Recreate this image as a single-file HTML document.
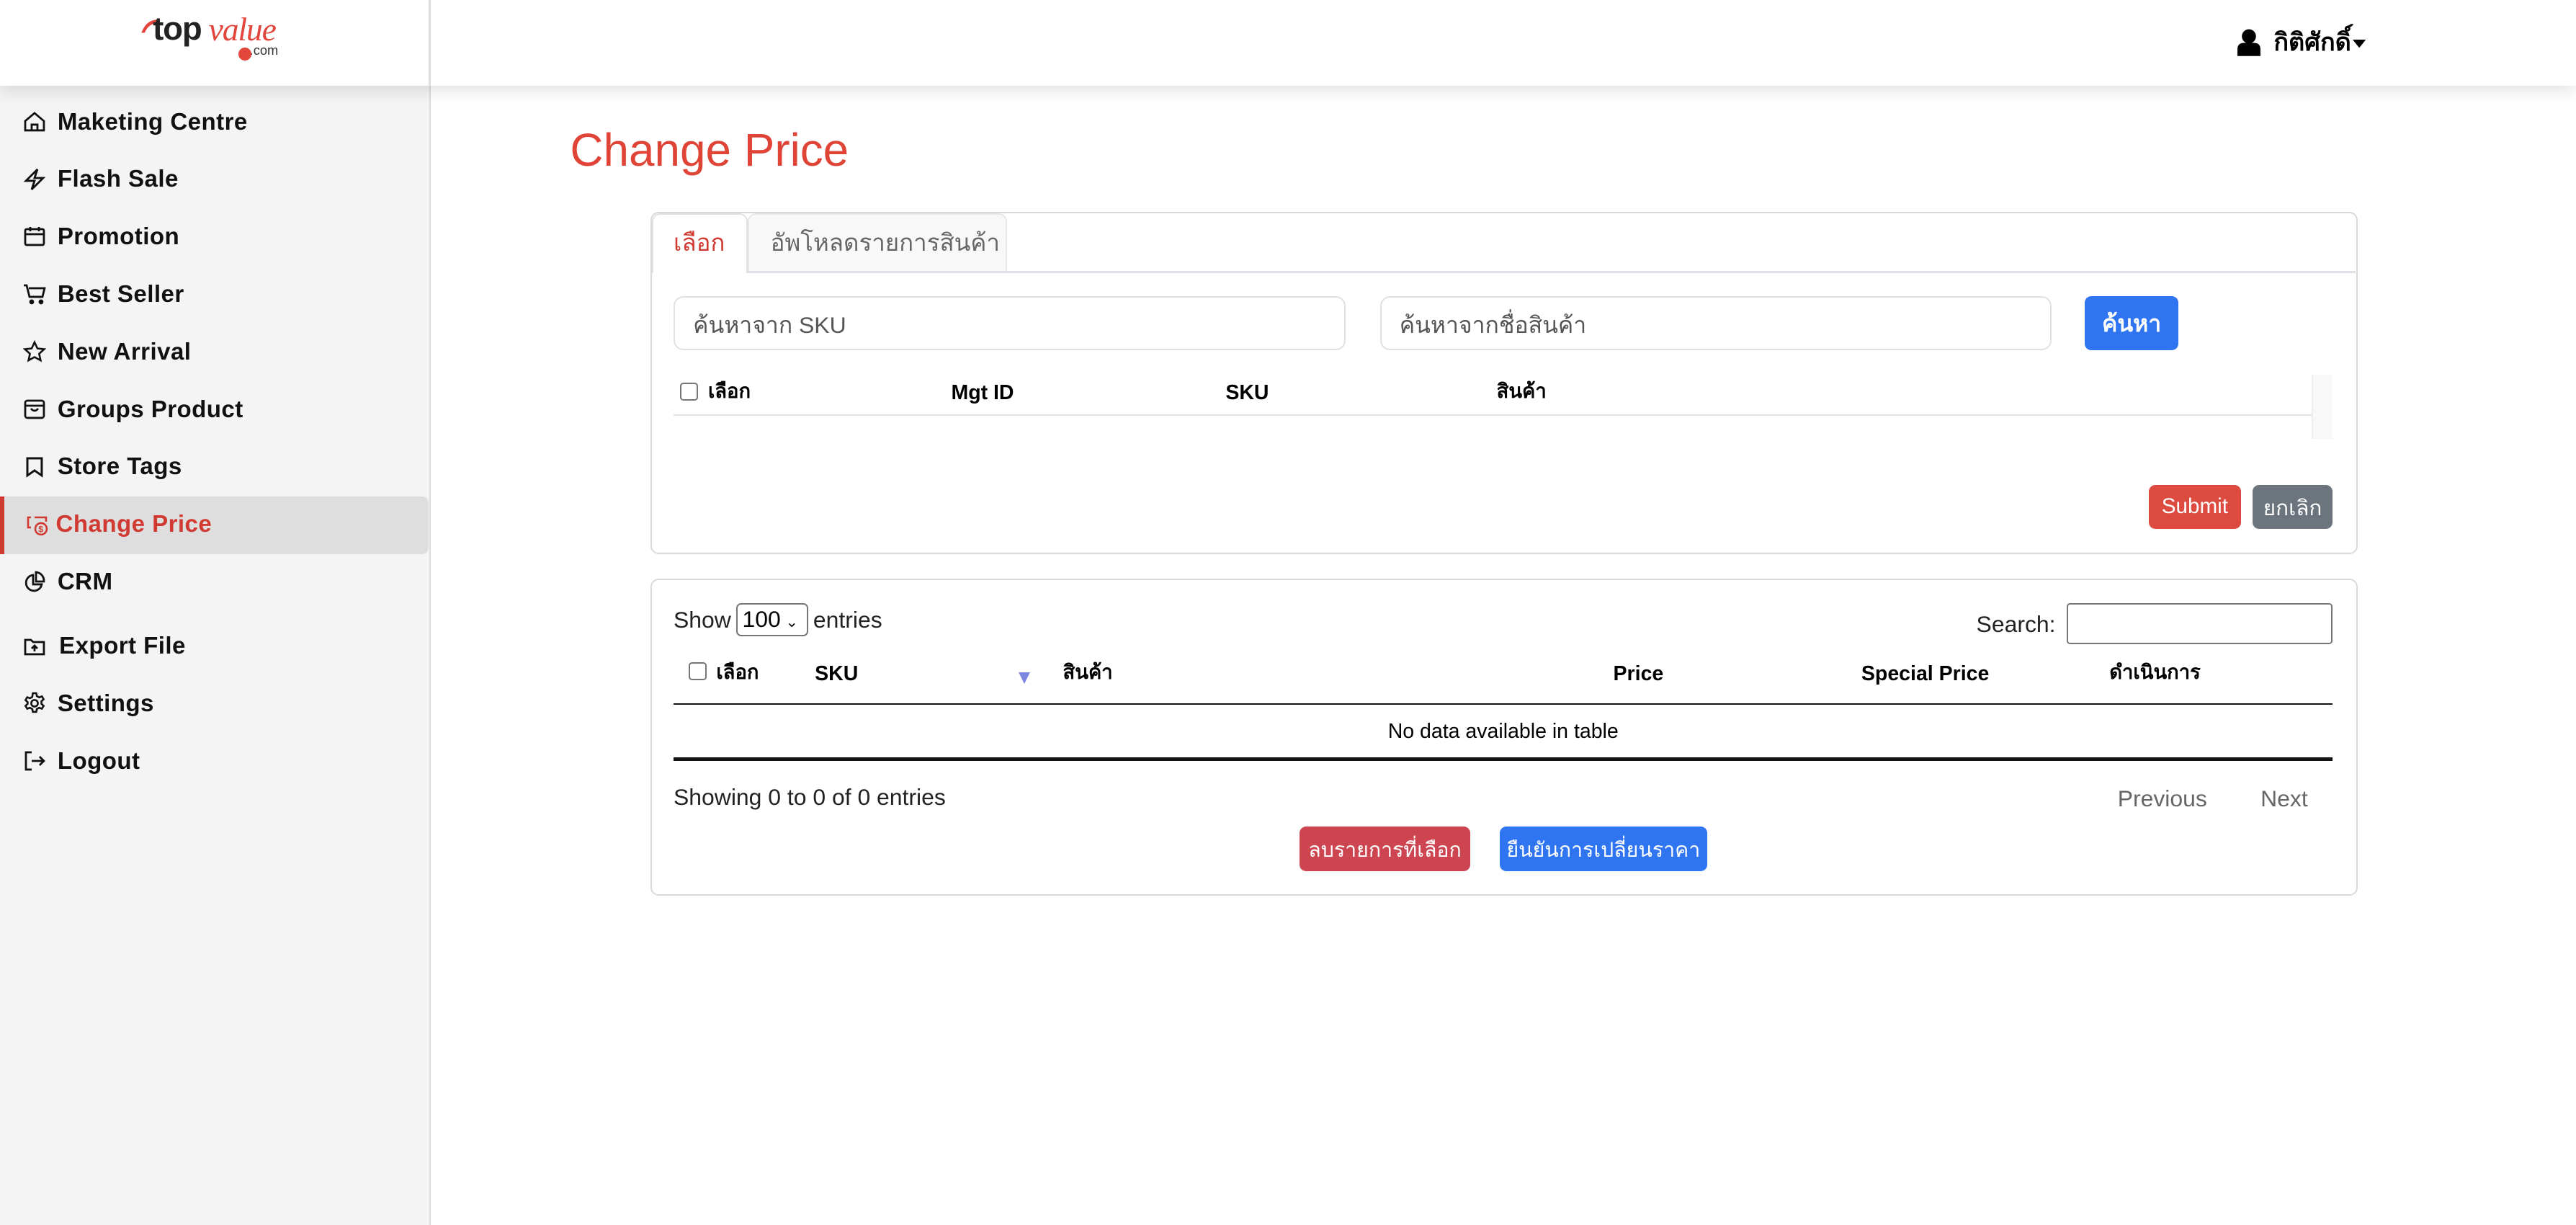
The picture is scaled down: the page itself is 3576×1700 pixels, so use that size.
<!DOCTYPE html>
<html><head><meta charset="utf-8"><style>
*{box-sizing:border-box;margin:0;padding:0}
html,body{width:3576px;height:1700px;overflow:hidden;background:#fff}
#w{zoom:2.2806;width:1568px;height:746px;position:relative;font-family:"Liberation Sans","DejaVu Sans",sans-serif;color:#000}
.a{position:absolute;white-space:nowrap}
#side{left:0;top:0;width:262px;height:746px;background:#f4f4f4;border-right:1px solid #ddd}
#head{left:0;top:0;width:1568px;height:52px;background:#fff;box-shadow:0 3px 10px rgba(0,0,0,.12)}
.mi{position:absolute;left:0;width:261px;height:34px;font-size:14.5px;font-weight:bold;color:#111}
.mi span{position:absolute;left:35px;top:9px;letter-spacing:.2px}
.mi svg{position:absolute;left:14px;top:10px;width:14px;height:14px}
.card{position:absolute;border:1px solid #d9d9d9;border-radius:5px;background:#fff}
.inp{position:absolute;height:33px;border:1px solid #dee2e6;border-radius:6px;font-size:14px;color:#555;padding:6px 11px}
.btn{position:absolute;color:#fff;border-radius:4px;text-align:center;font-size:13px}
.th{position:absolute;font-size:12.5px;font-weight:bold}
.t{font-size:12px;margin-top:-2px}
.cb{position:absolute;width:11px;height:11px;border:1px solid #777;border-radius:2px;background:#fff}
</style></head><body><div id="w">
<div class="a" id="side"></div>
<div class="a" id="head"></div>
<div class="a" style="left:261px;top:0;width:1px;height:52px;background:#ddd"></div>
<div class="a" style="left:85px;top:6px;width:95px;height:36px">
<svg width="12" height="10" style="position:absolute;left:0;top:5px" viewBox="0 0 12 10"><path d="M1 9 Q4 1 11 1 L10 3 Q5 4 3 9Z" fill="#e2453b"/></svg>
<span class="a" style="left:8px;top:0;font-size:20px;font-weight:bold;color:#222;letter-spacing:-.5px">top</span>
<span class="a" style="left:42px;top:0;font-size:20px;font-style:italic;color:#e2453b;font-family:'Liberation Serif',serif;letter-spacing:-.5px">value</span>
<span class="a" style="left:67px;top:20px;font-size:8px;color:#333">.com</span>
<div class="a" style="left:60px;top:23px;width:8px;height:8px;border-radius:50%;background:#e2453b"></div>
</div>
<svg class="a" style="left:1362px;top:17px" width="14" height="17" viewBox="0 0 14 17"><circle cx="7" cy="5" r="4.3"/><path d="M0 17 V13 Q0 9 4 9 H10 Q14 9 14 13 V17Z"/></svg>
<div class="a" style="left:1384px;top:14px;font-size:15px;font-weight:bold">กิติศักดิ์</div>
<svg class="a" style="left:1432px;top:24px" width="8" height="5"><path d="M0 0H8L4 5Z"/></svg>
<div class="mi" style="top:57px"><svg viewBox="0 0 16 16" fill="none" stroke="#111" stroke-width="1.4"><path d="M1.5 7.5 8 2l6.5 5.5V14h-13Z M6 14V10h4v4"/></svg><span>Maketing Centre</span></div>
<div class="mi" style="top:92px"><svg viewBox="0 0 16 16" fill="none" stroke="#111" stroke-width="1.4"><path d="M10 1 2 9h6l-2 6 8-8H8Z"/></svg><span>Flash Sale</span></div>
<div class="mi" style="top:127px"><svg viewBox="0 0 16 16" fill="none" stroke="#111" stroke-width="1.4"><rect x="1.5" y="3" width="13" height="11" rx="1"/><path d="M1.5 6.5h13M5 1.5v3M11 1.5v3"/></svg><span>Promotion</span></div>
<div class="mi" style="top:162px"><svg viewBox="0 0 16 16" fill="none" stroke="#111" stroke-width="1.4"><path d="M0.5 2h2l2 8h9l1.5-6H4"/><circle cx="6" cy="13.5" r="1" fill="#111"/><circle cx="12.5" cy="13.5" r="1" fill="#111"/></svg><span>Best Seller</span></div>
<div class="mi" style="top:197px"><svg viewBox="0 0 16 16" fill="none" stroke="#111" stroke-width="1.3"><path d="M8 1.5l2 4.3 4.7.5-3.5 3.2 1 4.6L8 11.8 3.8 14.1l1-4.6L1.3 6.3 6 5.8Z"/></svg><span>New Arrival</span></div>
<div class="mi" style="top:232px"><svg viewBox="0 0 16 16" fill="none" stroke="#111" stroke-width="1.4"><rect x="1.5" y="2" width="13" height="12" rx="1.5"/><path d="M1.5 5.5h13M5.5 7.5q2.5 3 5 0"/></svg><span>Groups Product</span></div>
<div class="mi" style="top:267px"><svg viewBox="0 0 16 16" fill="none" stroke="#111" stroke-width="1.5"><path d="M3 2h10v12l-5-3.5L3 14Z"/></svg><span>Store Tags</span></div>
<div class="a" style="left:0;top:302px;width:261px;height:35px;background:#dedede;border-left:3px solid #d13a32;border-radius:0 4px 4px 0"></div>
<div class="mi" style="top:302px;color:#d13a32"><svg viewBox="0 0 16 16" fill="none" stroke="#d13a32" stroke-width="1.3" style="left:16px"><path d="M3.5 3H1.5v7h2M6 3h8v3"/><circle cx="10.5" cy="11" r="4" fill="#dedede"/><text x="8.7" y="13.3" font-size="6" fill="#d13a32" stroke="none">$</text></svg><span style="left:34px">Change Price</span></div>
<div class="mi" style="top:337px"><svg viewBox="0 0 16 16" fill="none" stroke="#111" stroke-width="1.4"><path d="M7 3.5A5.5 5.5 0 1 0 13 10H7Z M9 1.5v6.5h5.5A6 6 0 0 0 9 1.5Z"/></svg><span>CRM</span></div>
<div class="mi" style="top:376px"><svg viewBox="0 0 16 16" fill="none" stroke="#111" stroke-width="1.4"><path d="M1.5 4h4l1.5 1.5h7.5V14h-13Z M8 12V8M6 10l2-2 2 2"/></svg><span style="left:36px">Export File</span></div>
<div class="mi" style="top:411px"><svg viewBox="0 0 16 16" fill="none" stroke="#111" stroke-width="1.3"><circle cx="8" cy="8" r="2.3"/><path d="M6.8 1h2.4l.4 2 1.6.9 1.9-.7 1.2 2-1.5 1.4v1.8l1.5 1.4-1.2 2-1.9-.7-1.6.9-.4 2H6.8l-.4-2-1.6-.9-1.9.7-1.2-2 1.5-1.4V7.2L1.7 5.8l1.2-2 1.9.7 1.6-.9Z"/></svg><span>Settings</span></div>
<div class="mi" style="top:446px"><svg viewBox="0 0 16 16" fill="none" stroke="#111" stroke-width="1.4"><path d="M6 2H2v12h4M6 8h8.5M11.5 5l3 3-3 3"/></svg><span>Logout</span></div>
<div class="a" style="left:347px;top:75px;font-size:28px;color:#df4436">Change Price</div>
<div class="card" style="left:396px;top:129px;width:1039px;height:208px"></div>
<div class="a" style="left:397px;top:165px;width:1037px;height:1px;background:#dee2e6"></div>
<div class="a" style="left:397px;top:130px;width:58px;height:36px;background:#fff;border:1px solid #dee2e6;border-bottom:none;border-radius:5px 5px 0 0"></div>
<div class="a" style="left:455px;top:130px;width:158px;height:35px;background:#f8f8f8;border:1px solid #e7e7e7;border-bottom:none;border-radius:5px 5px 0 0"></div>
<div class="a" style="left:410px;top:136px;font-size:14.5px;color:#d13a32">เลือก</div>
<div class="a" style="left:469px;top:136px;font-size:14.5px;color:#666">อัพโหลดรายการสินค้า</div>
<div class="inp" style="left:410px;top:180px;width:409px">ค้นหาจาก SKU</div>
<div class="inp" style="left:840px;top:180px;width:409px">ค้นหาจากชื่อสินค้า</div>
<div class="btn" style="left:1269px;top:180px;width:57px;height:33px;background:#2f74f0;font-weight:bold;font-size:14px;padding-top:6px">ค้นหา</div>
<div class="cb" style="left:414px;top:233px"></div>
<div class="th t" style="left:431px;top:231px">เลือก</div>
<div class="th" style="left:579px;top:232px">Mgt ID</div>
<div class="th" style="left:746px;top:232px">SKU</div>
<div class="th t" style="left:911px;top:231px">สินค้า</div>
<div class="a" style="left:410px;top:252px;width:997px;height:1px;background:#dee2e6"></div>
<div class="a" style="left:1407px;top:228px;width:13px;height:39px;background:#f8f8f8;border-left:1px solid #eee"></div>
<div class="btn" style="left:1308px;top:295px;width:56px;height:27px;background:#dd4a3f;padding-top:6px">Submit</div>
<div class="btn" style="left:1371px;top:295px;width:49px;height:27px;background:#6c757d;padding-top:4px">ยกเลิก</div>
<div class="card" style="left:396px;top:352px;width:1039px;height:193px"></div>
<div class="a" style="left:410px;top:369px;font-size:14px;color:#222">Show</div>
<div class="a" style="left:448px;top:367px;width:44px;height:20px;border:1px solid #777;border-radius:3px;font-size:14px;padding:1px 3px">100<span style="font-size:9px;margin-left:3px">⌄</span></div>
<div class="a" style="left:495px;top:369px;font-size:14px;color:#222">entries</div>
<div class="a" style="left:1203px;top:372px;font-size:14px;color:#222">Search:</div>
<div class="a" style="left:1258px;top:367px;width:162px;height:25px;border:1px solid #777;border-radius:2px"></div>
<div class="cb" style="left:419px;top:403px"></div>
<div class="th t" style="left:436px;top:402px">เลือก</div>
<div class="th" style="left:496px;top:403px">SKU</div>
<svg class="a" style="left:620px;top:409px" width="7" height="7"><path d="M0 0H7L3.5 7Z" fill="#7d86e0"/></svg>
<div class="th t" style="left:647px;top:402px">สินค้า</div>
<div class="th" style="left:982px;top:403px">Price</div>
<div class="th" style="left:1133px;top:403px">Special Price</div>
<div class="th t" style="left:1284px;top:402px">ดำเนินการ</div>
<div class="a" style="left:410px;top:428px;width:1010px;height:1px;background:#111"></div>
<div class="a" style="left:410px;top:438px;width:1010px;text-align:center;font-size:12.5px">No data available in table</div>
<div class="a" style="left:410px;top:461px;width:1010px;height:2px;background:#111"></div>
<div class="a" style="left:410px;top:477px;font-size:14px;color:#222">Showing 0 to 0 of 0 entries</div>
<div class="a" style="left:1289px;top:478px;font-size:14px;color:#666">Previous</div>
<div class="a" style="left:1376px;top:478px;font-size:14px;color:#666">Next</div>
<div class="btn" style="left:791px;top:503px;width:104px;height:27px;background:#cc4550;padding-top:4px;font-size:12.5px">ลบรายการที่เลือก</div>
<div class="btn" style="left:913px;top:503px;width:126px;height:27px;background:#2f74f0;padding-top:4px;font-size:12.5px">ยืนยันการเปลี่ยนราคา</div>
</div></body></html>
